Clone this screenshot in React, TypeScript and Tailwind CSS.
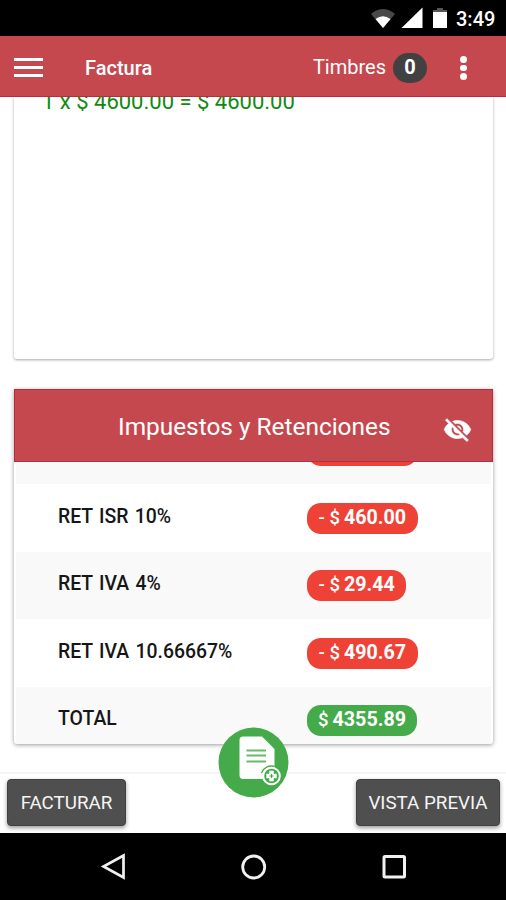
type Row = { label: string; sign: string; amount: string; total?: boolean };

const rows: Row[] = [
  { label: "RET ISR 10%", sign: "- $", amount: "460.00" },
  { label: "RET IVA 4%", sign: "- $", amount: "29.44" },
  { label: "RET IVA 10.66667%", sign: "- $", amount: "490.67" },
  { label: "TOTAL", sign: "$", amount: "4355.89", total: true },
];

function StatusBar() {
  return (
    <div className="flex h-9 shrink-0 items-center justify-end bg-black pr-[10px] text-white">
      <svg className="mt-0.5 h-5 w-[26px]" viewBox="0 0 26 20">
        <path d="M1 5Q13-5 25 5L13 19Z" fill="#484848" />
        <path d="M5.5 10Q13 4.500 20.500 10L13 19Z" fill="#fff" />
      </svg>
      <svg className="ml-[5px] h-[22px] w-[22px]" viewBox="0 0 22 22">
        <path d="M21.500 0.500V21H0.500Z" fill="#fff" />
      </svg>
      <svg className="ml-[10px] h-[22px] w-[14px]" viewBox="0 0 14 22">
        <path d="M0 3H4V1H10V3H14V6H0Z" fill="#555" />
        <path d="M0 5H14V21H0Z" fill="#fff" />
      </svg>
      <span className="ml-[9px] mt-[2px] w-[40px] whitespace-nowrap text-[20px] font-medium leading-6">3:49</span>
    </div>
  );
}

function AppBar() {
  return (
    <header className="flex h-[61px] shrink-0 items-center border-b border-[#bb2b40] bg-[#c6484f] text-white">
      <div className="ml-[14px] mt-[2px] flex w-[29px] flex-col gap-[5px]">
        <span className="h-[3px] bg-white" />
        <span className="h-[3px] bg-white" />
        <span className="h-[3px] bg-white" />
      </div>
      <h1 className="ml-[42px] mt-[4px] text-[20px] font-medium leading-6">Factura</h1>
      <span className="ml-auto mt-0.5 text-[20px] leading-6">Timbres</span>
      <span className="ml-[7px] mt-[4px] flex h-[30px] w-[34px] items-center justify-center rounded-[15px] bg-[#414141] pb-[2px] text-[20px] font-bold">
        0
      </span>
      <div className="ml-[33px] mr-[39px] mt-1 flex w-[7px] flex-col items-center gap-[2px]">
        <span className="size-[6.500px] rounded-full bg-white" />
        <span className="size-[6.500px] rounded-full bg-white" />
        <span className="size-[6.500px] rounded-full bg-white" />
      </div>
    </header>
  );
}

function EyeOff() {
  return (
    <svg
      className="ml-auto mr-[20px] mt-[9px] size-[29px]"
      viewBox="0 0 24 24"
      fill="#fff"
      stroke="#fff"
      strokeWidth="0.5"
    >
      <path d="M12 7c2.760 0 5 2.240 5 5 0 .65-.13 1.260-.36 1.830l2.920 2.920c1.510-1.260 2.700-2.890 3.430-4.750-1.730-4.390-6-7.500-11-7.500-1.400 0-2.740.25-3.980.7l2.160 2.160C10.740 7.130 11.350 7 12 7zM2 4.270l2.280 2.280.46.46C3.080 8.300 1.780 10.020 1 12c1.730 4.390 6 7.500 11 7.500 1.550 0 3.030-.3 4.380-.84l.42.42L19.730 22 21 20.730 3.270 3 2 4.270zM7.530 9.800l1.550 1.550c-.05.21-.08.43-.08.65 0 1.660 1.340 3 3 3 .22 0 .44-.03.65-.08l1.550 1.550c-.67.33-1.410.53-2.200.53-2.760 0-5-2.240-5-5 0-.79.2-1.530.53-2.200zm4.310-.78l3.150 3.150.02-.16c0-1.660-1.340-3-3-3l-.17.01z" />
    </svg>
  );
}

function TaxRow({ label, sign, amount, total }: Row) {
  return (
    <div className="flex h-[67.5px] shrink-0 items-start odd:bg-white even:bg-[#f9f9f9]">
      <span className="mt-[20.500px] w-[249px] shrink-0 whitespace-nowrap pl-[42px] text-[19.400px] font-medium leading-6 text-[#161616] [word-spacing:1.5px]">
        {label}
      </span>
      <span
        className={
          "ml-[42px] mt-[18.5px] flex h-[31px] items-center gap-[4px] whitespace-nowrap rounded-[14px] pb-px text-[19.700px] font-bold leading-6 text-white " +
          (total ? "bg-[#45ab4a] px-[11px]" : "bg-[#ef4237] px-[11.500px]")
        }
      >
        <span className="text-[18.500px] font-medium">{sign}</span>
        <span>{amount}</span>
      </span>
    </div>
  );
}

export default function App() {
  return (
    <div className="relative flex h-[900px] w-[506px] flex-col overflow-hidden bg-white font-['Roboto',sans-serif]">
      <StatusBar />
      <AppBar />
      <main className="h-[675px] shrink-0 overflow-hidden px-[14px]">
        <section className="h-[262px] w-[479px] rounded-b-[3px] bg-white shadow-[0_1px_3px_rgba(0,0,0,0.35)]">
          <p className="-translate-y-[7px] whitespace-nowrap pl-[28px] text-[22px] leading-6 text-[#128a12]">
            1 x $ 4600.00 = $ 4600.00
          </p>
        </section>
        <section className="mt-[30px] h-[355px] w-[479px] overflow-hidden rounded-b-[3px] shadow-[0_1px_4px_rgba(0,0,0,0.4)]">
          <div className="flex h-[72.5px] items-center border border-[#b92b3e] bg-[#c6484f] text-white">
            <h2 className="ml-[103px] mt-[3px] whitespace-nowrap text-[24.400px] leading-8">
              Impuestos y Retenciones
            </h2>
            <EyeOff />
          </div>
          <div className="mx-[2px] flex h-[22.500px] items-start overflow-hidden bg-[#f9f9f9] pl-[291px]">
            <span className="-mt-[27px] h-[31px] w-[111px] shrink-0 rounded-[14px] bg-[#ef4237]" />
          </div>
          <div className="mx-[2px] flex flex-col">
            {rows.map((row) => (
              <TaxRow key={row.label} {...row} />
            ))}
          </div>
        </section>
      </main>
      <footer className="flex h-[61px] shrink-0 items-start justify-between border-t-2 border-[#f5f5f5] bg-white pl-[7px] pr-[6px] pt-[5px] text-[18.800px] text-[#f5f5f5]">
        <button className="h-[47px] w-[119px] whitespace-nowrap rounded-[4px] border border-[#414141] bg-[#4f4f4f] pt-px shadow-[0_2px_4px_rgba(0,0,0,0.4)]">
          FACTURAR
        </button>
        <button className="h-[47px] w-[144px] whitespace-nowrap rounded-[4px] border border-[#414141] bg-[#4f4f4f] pt-px shadow-[0_2px_4px_rgba(0,0,0,0.4)]">
          VISTA PREVIA
        </button>
      </footer>
      <nav className="flex h-[67px] shrink-0 items-center justify-between bg-black pl-[99px] pr-[99px]">
        <svg className="size-7" viewBox="0 0 28 28" fill="none" stroke="#f1f1f1" strokeWidth="2.700">
          <path d="M24.500 2.500V24.500L4.500 13.500Z" />
        </svg>
        <svg className="size-7" viewBox="0 0 28 28" fill="none" stroke="#f1f1f1" strokeWidth="2.800">
          <circle cx="13.700" cy="14" r="11" />
        </svg>
        <svg className="size-[26px]" viewBox="0 0 26 26" fill="none" stroke="#f1f1f1" strokeWidth="3">
          <rect x="3" y="2.500" width="20.500" height="20.500" rx="1" />
        </svg>
      </nav>
      <button className="absolute left-[218px] top-[727px] size-[71px]">
        <svg className="size-[71px]" viewBox="0 0 71 71">
          <circle cx="35.500" cy="35.500" r="35" fill="#45ab4a" />
          <path d="M25 9.500H44L56.500 22V48Q56.500 52 52.500 52H25Q21.500 52 21.500 48V13Q21.500 9.500 25 9.500Z" fill="#fff" />
          <path d="M28.500 23.500H48M28.500 28.500H48M28.500 34.500H48" stroke="#66b96b" strokeWidth="2" />
          <path d="M43.500 46A10.500 10.500 0 0 1 56.500 39.500" fill="none" stroke="#45ab4a" strokeWidth="1.500" />
          <circle cx="53.500" cy="49" r="8.300" fill="#45ab4a" stroke="#fff" strokeWidth="2" />
          <path d="M53.500 43.800V54.200M48.300 49H58.700" stroke="#fff" strokeWidth="4.500" />
          <path d="M53.500 47V51M51.500 49H55.500" stroke="#45ab4a" strokeWidth="1.200" />
        </svg>
      </button>
    </div>
  );
}
